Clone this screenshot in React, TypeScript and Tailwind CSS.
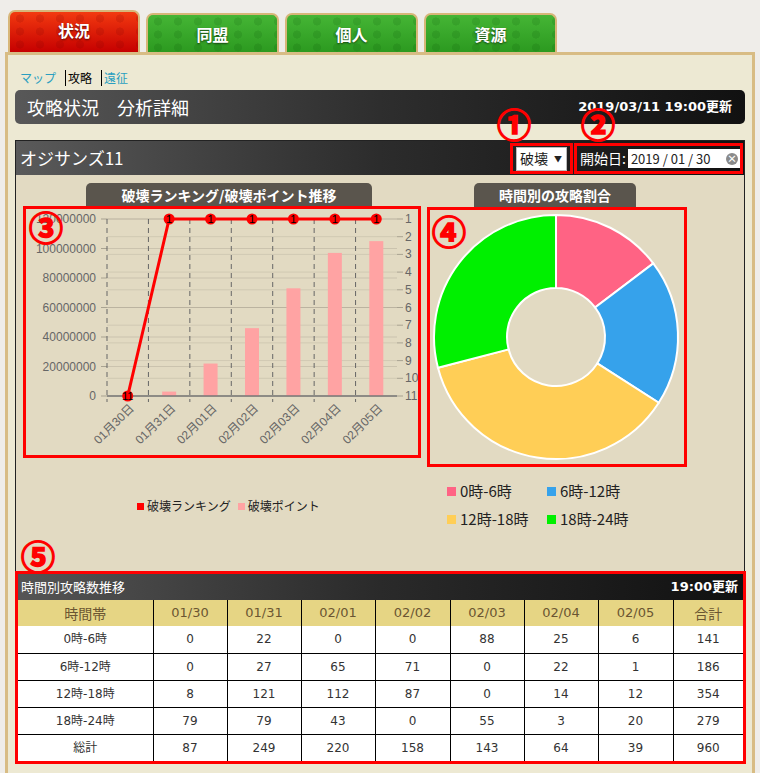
import React from "react";

const JP = "[font-family:'Noto_Sans_CJK_JP',sans-serif]";
const DV = "[font-family:'DejaVu_Sans','Noto_Sans_CJK_JP',sans-serif]";

const tabGreen =
  "h-[39px] w-[133px] rounded-t-[7px] border-2 border-b-0 border-[#d7b679] flex items-center justify-center text-white font-bold text-[16px] [text-shadow:0_1px_2px_rgba(0,0,0,0.6)] [background-image:radial-gradient(circle,rgba(0,70,0,0.13)_32%,transparent_36%),linear-gradient(to_bottom,#45b535,#2c9a20)] [background-size:20px_13px,100%_100%]";
const tabRed =
  "h-[42px] w-[132px] rounded-t-[7px] border-2 border-b-0 border-[#d7b679] flex items-center justify-center pb-[4px] text-white font-bold text-[16px] [text-shadow:0_1px_2px_rgba(0,0,0,0.6)] [background-image:radial-gradient(circle,rgba(120,0,0,0.16)_32%,transparent_36%),linear-gradient(to_bottom,#f23a10,#c60000)] [background-size:20px_13px,100%_100%]";

const circ =
  "absolute text-[#ff0000] font-bold text-[34px] leading-none [font-family:'Noto_Sans_CJK_JP',sans-serif] [-webkit-text-stroke:1.6px_#ff0000]";

function BarLineChart() {
  const L = 81,
    R = 371,
    T = 10,
    B = 187;
  const H = B - T;
  const slot = (R - L) / 7;
  const dates = ["01月30日", "01月31日", "02月01日", "02月02日", "02月03日", "02月04日", "02月05日"];
  const vals = [0, 3e6, 22e6, 46e6, 73e6, 97e6, 105e6];
  const ranks = [11, 1, 1, 1, 1, 1, 1];
  const leftLabels = ["120000000", "100000000", "80000000", "60000000", "40000000", "20000000", "0"];
  const cx = (i: number) => L + (i + 0.5) * slot;
  const ry = (r: number) => T + ((r - 1) * H) / 10;
  return (
    <svg width="392" height="246" className="block" style={{ fontFamily: "'Liberation Sans','Noto Sans CJK JP',sans-serif" }}>
      {leftLabels.map((_, i) => (
        <line key={"hg" + i} x1={L} x2={R} y1={T + (i * H) / 6} y2={T + (i * H) / 6} stroke="rgba(0,0,0,0.1)" />
      ))}
      {Array.from({ length: 11 }).map((_, i) => (
        <line key={"hr" + i} x1={L} x2={R} y1={ry(i + 1)} y2={ry(i + 1)} stroke="rgba(0,0,0,0.08)" />
      ))}
      {leftLabels.map((t, i) => (
        <g key={"ll" + i}>
          <line x1={L - 6} x2={L} y1={T + (i * H) / 6} y2={T + (i * H) / 6} stroke="rgba(0,0,0,0.25)" />
          <text x={L - 11} y={T + (i * H) / 6 + 4} textAnchor="end" fontSize="12" fill="#666">
            {t}
          </text>
        </g>
      ))}
      {Array.from({ length: 11 }).map((_, i) => (
        <g key={"rl" + i}>
          <line x1={R} x2={R + 6} y1={ry(i + 1)} y2={ry(i + 1)} stroke="rgba(0,0,0,0.25)" />
          <text x={R + 8} y={ry(i + 1) + 4} fontSize="12" fill="#666">
            {i + 1}
          </text>
        </g>
      ))}
      {dates.map((_, i) => (
        <line key={"vd" + i} x1={L + i * slot} x2={L + i * slot} y1={T} y2={B + 6} stroke="#666" strokeDasharray="5 4" />
      ))}
      {vals.map((v, i) => {
        const h = (v / 120e6) * H;
        return <rect key={"b" + i} x={cx(i) - 7} y={B - h} width="14" height={h} fill="#ffa3a3" />;
      })}
      <line x1={L} x2={R} y1={B} y2={B} stroke="#777" strokeWidth="1.5" />
      <polyline points={ranks.map((r, i) => `${cx(i)},${ry(r)}`).join(" ")} fill="none" stroke="#ff0000" strokeWidth="3" />
      {ranks.map((r, i) => (
        <g key={"p" + i}>
          <circle cx={cx(i)} cy={ry(r)} r="5.5" fill="#ff0000" />
          <text x={cx(i)} y={ry(r) + 4} textAnchor="middle" fontSize="11" fill="#000">
            {r}
          </text>
        </g>
      ))}
      {dates.map((d, i) => (
        <text
          key={"xl" + i}
          x={cx(i) + 7}
          y={B + 13}
          textAnchor="end"
          fontSize="12"
          fill="#666"
          transform={`rotate(-45 ${cx(i) + 7} ${B + 13})`}
        >
          {d}
        </text>
      ))}
    </svg>
  );
}

function Donut() {
  const data = [
    { v: 141, c: "#ff6384" },
    { v: 186, c: "#36a2eb" },
    { v: 354, c: "#ffce56" },
    { v: 279, c: "#00f000" },
  ];
  const total = data.reduce((a, b) => a + b.v, 0);
  const cx = 126,
    cy = 127,
    RO = 122,
    RI = 49;
  let a0 = -Math.PI / 2;
  const pt = (r: number, a: number) => `${cx + r * Math.cos(a)},${cy + r * Math.sin(a)}`;
  return (
    <svg width="254" height="254" className="block">
      {data.map((d, i) => {
        const a1 = a0 + (d.v / total) * Math.PI * 2;
        const large = a1 - a0 > Math.PI ? 1 : 0;
        const p = `M ${pt(RO, a0)} A ${RO} ${RO} 0 ${large} 1 ${pt(RO, a1)} L ${pt(RI, a1)} A ${RI} ${RI} 0 ${large} 0 ${pt(RI, a0)} Z`;
        a0 = a1;
        return <path key={i} d={p} fill={d.c} stroke="#fff" strokeWidth="2" />;
      })}
    </svg>
  );
}

const cols = ["01/30", "01/31", "02/01", "02/02", "02/03", "02/04", "02/05"];
const rows: [string, number[]][] = [
  ["0時-6時", [0, 22, 0, 0, 88, 25, 6, 141]],
  ["6時-12時", [0, 27, 65, 71, 0, 22, 1, 186]],
  ["12時-18時", [8, 121, 112, 87, 0, 14, 12, 354]],
  ["18時-24時", [79, 79, 43, 0, 55, 3, 20, 279]],
  ["総計", [87, 249, 220, 158, 143, 64, 39, 960]],
];
const widths = [135, 74, 74, 74, 75, 74, 74, 75, 70];

export default function App() {
  return (
    <div className={`relative w-[760px] h-[773px] overflow-hidden bg-[#efede9] ${JP}`}>
      {/* tabs */}
      <div className="flex items-end gap-[6px] pl-[8px] pt-[10px] h-[52px]">
        <div className={tabRed}>状況</div>
        <div className={tabGreen}>同盟</div>
        <div className={tabGreen}>個人</div>
        <div className={`${tabGreen} w-[131px]`}>資源</div>
      </div>

      {/* panel */}
      <div className="mx-[5px] h-[721px] border-x-[3px] border-t-[3px] border-[#d8bc84] bg-[#ede9d3] pl-[7px] pr-[7px]">
        <div className="h-[32px] pt-[13px] pl-[5px] flex items-center text-[12px] leading-[16px]">
          <span className="text-[#2a9fc0]">マップ</span>
          <span className="ml-[9px] border-l border-black pl-[2px] text-black">攻略</span>
          <span className="ml-[9px] border-l border-black pl-[2px] text-[#2a9fc0]">遠征</span>
        </div>

        <div className="mt-[3px] h-[34px] rounded-[5px] bg-linear-to-r from-[#585858] via-[#2e2e2e] to-[#111] flex items-center justify-between pl-[12px] pr-[13px]">
          <span className="text-white text-[18px]">攻略状況　分析詳細</span>
          <span className={`text-white font-bold text-[13px] ${DV}`}>2019/03/11 19:00更新</span>
        </div>

        {/* main box */}
        <div className="mt-[16px] border border-[#222] bg-[#e2dac2]">
          <div className="h-[34px] bg-linear-to-r from-[#5a5a5a] via-[#2c2c2c] to-[#111] flex items-center pl-[4px]">
            <span className="text-white text-[17px]">オジサンズ11</span>
            <div className="ml-auto mr-[1px] flex items-center h-[31px] mt-[1px]">
              <div className="h-[31px] w-[63px] border-[3px] border-[#ff0000] flex items-center justify-center">
                <div className="h-[24px] w-[51px] bg-white border border-[#bbb] flex items-center justify-between pl-[3px] pr-[4px] text-[14px] text-[#222]">
                  <span>破壊</span>
                  <span className="text-[8px] text-[#222]">▼</span>
                </div>
              </div>
              <div className="ml-[1px] h-[31px] w-[169px] border-[3px] border-[#ff0000] flex items-center pl-[3px]">
                <span className="text-white text-[14px]">開始日:</span>
                <div className={`ml-[2px] h-[19px] w-[112px] bg-white flex items-center justify-between pl-[3px] pr-[2px] text-[13px] text-[#222] ${JP}`}>
                  <span>2019 / 01 / 30</span>
                  <span className="w-[12px] h-[12px] rounded-full bg-[#8a8a8a] text-white text-[10px] leading-[12px] flex items-center justify-center font-bold">×</span>
                </div>
              </div>
            </div>
          </div>

          <div className="h-[388px] mt-[8px] flex">
            {/* left column */}
            <div className="w-[411px] flex flex-col">
              <div className="ml-[70px] w-[286px] h-[24px] rounded-t-[5px] bg-[#5a554d] text-white font-bold text-[14px] flex items-center justify-center">
                破壊ランキング/破壊ポイント推移
              </div>
              <div className="ml-[7px] -mt-[1px] w-[398px] h-[252px] border-[3px] border-[#ff0000] overflow-hidden">
                <BarLineChart />
              </div>
              <div className="ml-[121px] mt-[40px] flex items-center text-[12px] text-[#222] leading-[16px]">
                <span className="w-[7px] h-[7px] bg-[#ff0000] mr-[3px]" />
                <span>破壊ランキング</span>
                <span className="ml-[7px] w-[7px] h-[7px] bg-[#ffa3a3] mr-[3px]" />
                <span>破壊ポイント</span>
              </div>
            </div>
            {/* right column */}
            <div className="w-[260px] flex flex-col">
              <div className="ml-[47px] w-[162px] h-[24px] rounded-t-[5px] bg-[#5a554d] text-white font-bold text-[14px] flex items-center justify-center">
                時間別の攻略割合
              </div>
              <div className="w-[260px] h-[260px] border-[3px] border-[#ff0000]">
                <Donut />
              </div>
              <div className="mt-[16px] ml-[20px] grid grid-cols-[100px_120px] gap-y-[12px] text-[15px] leading-[16px] text-[#222]">
                <div className="flex items-center"><span className="w-[9px] h-[9px] bg-[#ff6384] mr-[4px]" />0時-6時</div>
                <div className="flex items-center"><span className="w-[9px] h-[9px] bg-[#36a2eb] mr-[4px]" />6時-12時</div>
                <div className="flex items-center"><span className="w-[9px] h-[9px] bg-[#ffce56] mr-[4px]" />12時-18時</div>
                <div className="flex items-center"><span className="w-[9px] h-[9px] bg-[#00f000] mr-[4px]" />18時-24時</div>
              </div>
            </div>
          </div>

          {/* table */}
          <div className="-ml-[1px] -mb-[1px] w-[731px] border-[3px] border-[#ff0000] bg-white">
            <div className="h-[26px] bg-linear-to-r from-[#555] via-[#2a2a2a] to-[#111] flex items-center justify-between pl-[3px] pr-[5px]">
              <span className="text-white text-[13px]">時間別攻略数推移</span>
              <span className={`text-white font-bold text-[13px] ${DV}`}>19:00更新</span>
            </div>
            <table className={`table-fixed border-collapse w-[725px] ${DV} text-[12px]`}>
              <colgroup>
                {widths.map((w, i) => (
                  <col key={i} style={{ width: w }} />
                ))}
              </colgroup>
              <thead>
                <tr className="bg-[#e6d584] text-[#6b5532]">
                  <th className={`h-[26px] font-normal text-[14px] ${JP}`}>時間帯</th>
                  {cols.map((c) => (
                    <th key={c} className="h-[26px] font-normal text-[13px] border-l border-black">
                      {c}
                    </th>
                  ))}
                  <th className={`h-[26px] font-normal border-l border-black text-[14px] ${JP}`}>合計</th>
                </tr>
              </thead>
              <tbody>
                {rows.map(([label, vals], ri) => (
                  <tr key={label} className="text-[#333]">
                    <td className={`h-[27px] text-center ${ri > 0 ? "border-t border-black" : ""}`}>{label}</td>
                    {vals.map((v, i) => (
                      <td key={i} className={`h-[27px] text-center border-l border-black ${ri > 0 ? "border-t" : ""}`}>
                        {v}
                      </td>
                    ))}
                  </tr>
                ))}
              </tbody>
            </table>
          </div>
        </div>
      </div>

      {/* annotations */}
      <div className={`${circ} left-[497px] top-[107px]`}>①</div>
      <div className={`${circ} left-[581px] top-[107px]`}>②</div>
      <div className={`${circ} left-[29px] top-[210px]`}>③</div>
      <div className={`${circ} left-[432px] top-[214px]`}>④</div>
      <div className={`${circ} left-[21px] top-[539px]`}>⑤</div>
    </div>
  );
}
